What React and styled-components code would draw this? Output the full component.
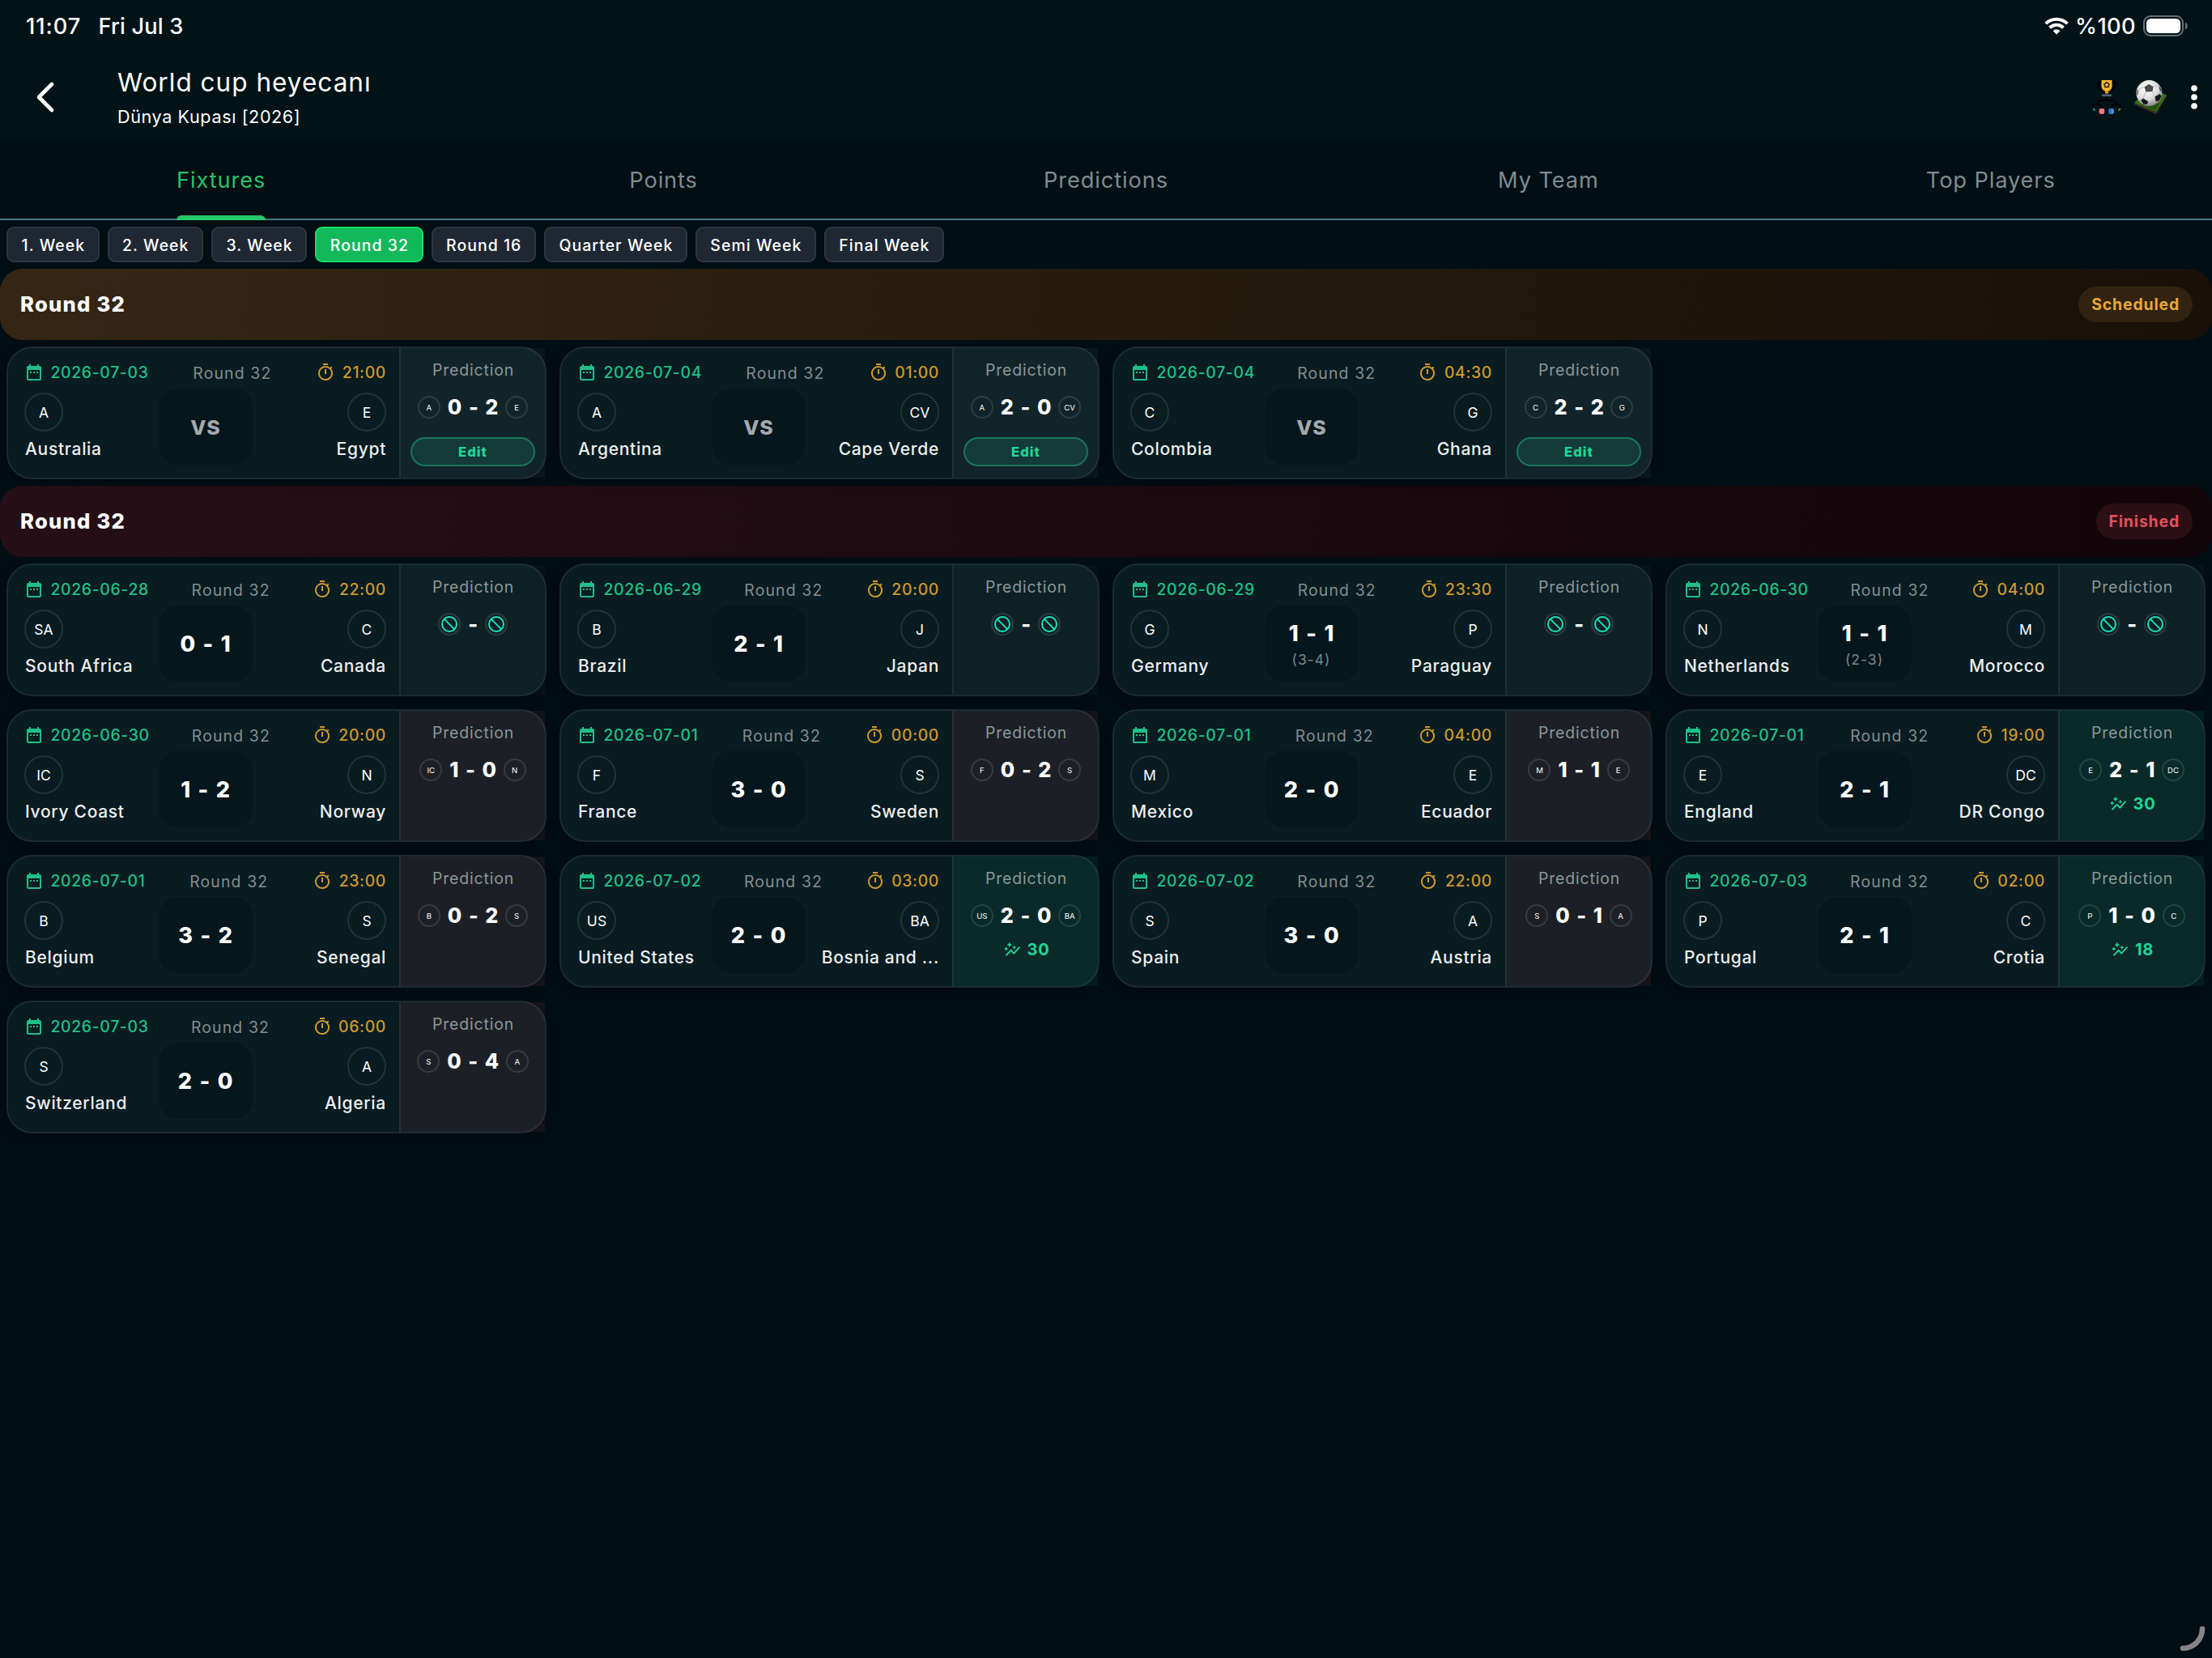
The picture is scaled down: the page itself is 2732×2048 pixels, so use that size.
import React from "react";
import styled, { createGlobalStyle } from "styled-components";
import { MdDateRange, MdOutlineTimer, MdAutoGraph } from "react-icons/md";

const tabs = ["Fixtures", "Points", "Predictions", "My Team", "Top Players"];
const weeks = [
  "1. Week",
  "2. Week",
  "3. Week",
  "Round 32",
  "Round 16",
  "Quarter Week",
  "Semi Week",
  "Final Week",
];

const scheduled = [
  { date: "2026-07-03", time: "21:00", home: ["A", "Australia"], away: ["E", "Egypt"], guess: "0 - 2" },
  { date: "2026-07-04", time: "01:00", home: ["A", "Argentina"], away: ["CV", "Cape Verde"], guess: "2 - 0" },
  { date: "2026-07-04", time: "04:30", home: ["C", "Colombia"], away: ["G", "Ghana"], guess: "2 - 2" },
];

const finished = [
  { date: "2026-06-28", time: "22:00", home: ["SA", "South Africa"], away: ["C", "Canada"], score: "0 - 1" },
  { date: "2026-06-29", time: "20:00", home: ["B", "Brazil"], away: ["J", "Japan"], score: "2 - 1" },
  { date: "2026-06-29", time: "23:30", home: ["G", "Germany"], away: ["P", "Paraguay"], score: "1 - 1", pens: "(3-4)" },
  { date: "2026-06-30", time: "04:00", home: ["N", "Netherlands"], away: ["M", "Morocco"], score: "1 - 1", pens: "(2-3)" },
  { date: "2026-06-30", time: "20:00", home: ["IC", "Ivory Coast"], away: ["N", "Norway"], score: "1 - 2", guess: "1 - 0" },
  { date: "2026-07-01", time: "00:00", home: ["F", "France"], away: ["S", "Sweden"], score: "3 - 0", guess: "0 - 2" },
  { date: "2026-07-01", time: "04:00", home: ["M", "Mexico"], away: ["E", "Ecuador"], score: "2 - 0", guess: "1 - 1" },
  { date: "2026-07-01", time: "19:00", home: ["E", "England"], away: ["DC", "DR Congo"], score: "2 - 1", guess: "2 - 1", points: 30 },
  { date: "2026-07-01", time: "23:00", home: ["B", "Belgium"], away: ["S", "Senegal"], score: "3 - 2", guess: "0 - 2" },
  { date: "2026-07-02", time: "03:00", home: ["US", "United States"], away: ["BA", "Bosnia and ..."], score: "2 - 0", guess: "2 - 0", points: 30 },
  { date: "2026-07-02", time: "22:00", home: ["S", "Spain"], away: ["A", "Austria"], score: "3 - 0", guess: "0 - 1" },
  { date: "2026-07-03", time: "02:00", home: ["P", "Portugal"], away: ["C", "Crotia"], score: "2 - 1", guess: "1 - 0", points: 18 },
  { date: "2026-07-03", time: "06:00", home: ["S", "Switzerland"], away: ["A", "Algeria"], score: "2 - 0", guess: "0 - 4" },
];

const WifiIcon = () => (
  <svg width="30" height="22" viewBox="0 0 30 22" fill="none" stroke="#fff" strokeWidth="4">
    <path d="M1.6 8.2 A19 19 0 0 1 28.4 8.2" />
    <path d="M6.6 13.2 A12 12 0 0 1 23.4 13.2" />
    <path d="M10.6 17.2 A6.2 6.2 0 0 1 19.4 17.2 L15 21.5 Z" fill="#fff" stroke="none" />
  </svg>
);

const BatteryIcon = () => (
  <svg width="56" height="26" viewBox="0 0 56 26" fill="none">
    <rect x="1" y="1" width="48" height="24" rx="8" stroke="#667175" strokeWidth="2" />
    <rect x="4" y="4" width="42" height="18" rx="5.5" fill="#fff" />
    <path d="M52 8.5 C55.6 10 55.6 16 52 17.5 Z" fill="#667175" />
  </svg>
);

const BackIcon = () => (
  <svg width="24" height="40" viewBox="0 0 24 40" fill="none">
    <path d="M20 4 L4 20 L20 36" stroke="#fff" strokeWidth="4.6" strokeLinecap="round" strokeLinejoin="round" />
  </svg>
);

const TrophyIcon = () => (
  <svg width="36" height="44" viewBox="0 0 36 44" fill="none">
    <path d="M12 3 H8 C6 8 9 13 13 14 M25 3 H28 C30 8 27 13 23 14" stroke="#000" strokeWidth="2.4" />
    <path d="M11.5 1 H24.5 V8 C24.5 12 21.5 15 18 15 S11.5 12 11.5 8 Z" fill="#ffb52e" />
    <path d="M18 3.8 L21 6 L19.9 9.6 H16.1 L15 6 Z" stroke="#1c1608" strokeWidth="1.5" />
    <rect x="16" y="15" width="4" height="3.5" fill="#f59a12" />
    <rect x="11.6" y="18" width="12.8" height="3.4" rx="1.2" fill="#50677f" stroke="#000" strokeWidth="0.8" />
    <path
      d="M18 22 V26 M7 31 V29 C7 27 8 26 10 26 H26 C28 26 29 27 29 29 V31 M1 37 V34 C1 32 2 31 4 31 H9 C11 31 12 32 12 34 V36 M24 36 V34 C24 32 25 31 27 31 H32 C34 31 35 32 35 34 V37"
      stroke="#000"
      strokeWidth="1.7"
    />
    <rect x="8.6" y="36" width="6.6" height="7" rx="2.4" fill="#fb7480" />
    <rect x="20.4" y="36" width="6.6" height="7" rx="2.4" fill="#4a90e2" />
    <path d="M20.4 38.5 C20.4 37 21 36 22.5 36 H23.5 V43 H22.5 C21 43 20.4 42 20.4 40.7 Z" fill="#2470c4" />
    <path d="M1 36 L3.6 38.6" stroke="#3f98a8" strokeWidth="1.6" />
    <path d="M35 36 L32.4 38.6" stroke="#7aa23c" strokeWidth="1.6" />
  </svg>
);

const BallIcon = () => (
  <svg width="42" height="42" viewBox="0 0 42 42">
    <defs>
      <radialGradient id="ball" cx="0.4" cy="0.3" r="0.75">
        <stop offset="0" stopColor="#fff" />
        <stop offset="0.6" stopColor="#dcdcdc" />
        <stop offset="1" stopColor="#77777a" />
      </radialGradient>
    </defs>
    <path d="M1 28 L8 21 L35 16 L41 18.5 L28 41 Z" fill="#35701a" />
    <path d="M1 28 L28 39 L41 18.5 V20.5 L28 42 L1 30 Z" fill="#3b2d18" />
    <path d="M8 30 L27 37.4 L33 28 Z" fill="#23500f" />
    <circle cx="19.4" cy="16" r="16" fill="url(#ball)" />
    <path d="M13.5 8.3 L19 5 L24.6 8 L23.4 14 L15.4 14.4 Z" fill="#4c4c4f" />
    <path d="M3.8 13 L6.4 11 L6 17.5 L4 19 Z" fill="#7c7c7e" />
    <path d="M9 25 L12 22.6 L18.4 26.4 L16.6 30 L12.6 29.8 Z" fill="#17171a" />
    <path d="M26.4 20.4 L32.4 17 L34.6 19.8 L32 25 L27.8 26.6 Z" fill="#17171a" />
    <path d="M31 7 L34 11 L35 15 L32.6 12.4 Z" fill="#3a3a3d" />
    <path
      d="M15.4 14.4 L12 22.6 M23.4 14 L26.4 20.4 M13.5 8.3 L6.4 11 M24.6 8 L31 7 M18.4 26.4 L27.8 26.6"
      stroke="#b4b4b6"
      strokeWidth="0.8"
    />
  </svg>
);

const MoreIcon = () => (
  <svg width="8" height="30" viewBox="0 0 8 30" fill="#fff">
    <circle cx="4" cy="4" r="3.8" />
    <circle cx="4" cy="15" r="3.8" />
    <circle cx="4" cy="26" r="3.8" />
  </svg>
);

const NoneIcon = () => (
  <svg width="20" height="20" viewBox="0 0 20 20" fill="none" stroke="#10e8be" strokeWidth="1.9">
    <circle cx="10" cy="10" r="9" />
    <path d="M3.7 3.7 L16.3 16.3" />
  </svg>
);

const Prediction = ({ match, editable }) => {
  const [home, away] = [match.home[0], match.away[0]];
  let tone = "none";
  if (editable) tone = "open";
  else if (match.points) tone = "won";
  else if (match.guess) tone = "lost";
  return (
    <PredictionPane $tone={tone}>
      <PredictionLabel>Prediction</PredictionLabel>
      <Guess>
        <Badge $small>{match.guess ? home : <NoneIcon />}</Badge>
        <GuessScore>{match.guess || "-"}</GuessScore>
        <Badge $small>{match.guess ? away : <NoneIcon />}</Badge>
      </Guess>
      {editable && <EditButton>Edit</EditButton>}
      {match.points && (
        <Points>
          <MdAutoGraph size={22} />
          {match.points}
        </Points>
      )}
    </PredictionPane>
  );
};

const MatchCard = ({ match, editable }) => (
  <Card>
    <Match>
      <MatchInfo>
        <Meta $color="#1fc088">
          <MdDateRange size={24} />
          {match.date}
        </Meta>
        <Stage>Round 32</Stage>
        <Meta $color="#cf982f">
          <MdOutlineTimer size={24} />
          {match.time}
        </Meta>
      </MatchInfo>
      <Teams>
        <Team>
          <Badge>{match.home[0]}</Badge>
          <TeamName>{match.home[1]}</TeamName>
        </Team>
        <ScoreBox>
          {match.score ? <Score>{match.score}</Score> : <Versus>VS</Versus>}
          {match.pens && <Penalties>{match.pens}</Penalties>}
        </ScoreBox>
        <Team $end>
          <Badge>{match.away[0]}</Badge>
          <TeamName>{match.away[1]}</TeamName>
        </Team>
      </Teams>
    </Match>
    <Prediction match={match} editable={editable} />
  </Card>
);

const App = () => {
  return (
    <Page>
      <GlobalStyle />
      <Header>
        <StatusBar>
          <Clock>11:07</Clock>
          <Today>Fri Jul 3</Today>
          <Device>
            <WifiIcon />
            <Charge>%100</Charge>
            <BatteryIcon />
          </Device>
        </StatusBar>
        <Toolbar>
          <BackIcon />
          <div className="titles">
            <h1>World cup heyecanı</h1>
            <p>Dünya Kupası [2026]</p>
          </div>
          <div className="actions">
            <TrophyIcon />
            <BallIcon />
            <MoreIcon />
          </div>
        </Toolbar>
      </Header>
      <Tabs>
        {tabs.map((tab, i) => (
          <Tab key={tab} $active={i === 0}>
            <span>{tab}</span>
          </Tab>
        ))}
      </Tabs>
      <Weeks>
        {weeks.map((week) => (
          <Week key={week} $active={week === "Round 32"}>
            {week}
          </Week>
        ))}
      </Weeks>
      <Banner $from="#352614" $to="#181009">
        <h2>Round 32</h2>
        <Status $color="#e6a838" $background="#312310">
          Scheduled
        </Status>
      </Banner>
      <Grid>
        {scheduled.map((match) => (
          <MatchCard key={match.home[1]} match={match} editable />
        ))}
      </Grid>
      <Banner $from="#260f16" $to="#120509">
        <h2>Round 32</h2>
        <Status $color="#e4505f" $background="#2c0f15">
          Finished
        </Status>
      </Banner>
      <Grid>
        {finished.map((match) => (
          <MatchCard key={match.home[1]} match={match} />
        ))}
      </Grid>
      <Corner viewBox="0 0 40 40">
        <path d="M32 8 A24 24 0 0 1 8 32" />
      </Corner>
    </Page>
  );
};
export default App;

const GlobalStyle = createGlobalStyle`
  * {
    box-sizing: border-box;
  }
  body {
    margin: 0;
    background: #010e14;
    color: #fff;
    font-family: Inter, "Noto Sans", sans-serif;
  }
  h1, h2, p {
    margin: 0;
  }
  svg {
    display: block;
    flex: none;
  }
`;
const Page = styled.div`
  position: relative;
  height: 2048px;
  overflow: hidden;
  white-space: nowrap;
`;
const Header = styled.header`
  height: 176px;
  background: #021318;
`;
const StatusBar = styled.div`
  display: flex;
  align-items: center;
  height: 64px;
  padding: 0 29px 0 32px;
  font-size: 27.2px;
  font-weight: 500;
`;
const Clock = styled.span`
  letter-spacing: 1px;
`;
const Today = styled.span`
  margin-left: 21px;
  letter-spacing: 0.2px;
`;
const Device = styled.div`
  display: flex;
  align-items: center;
  margin-left: auto;
`;
const Charge = styled.span`
  margin: 0 9px 0 8px;
  letter-spacing: 0.4px;
`;
const Toolbar = styled.div`
  display: flex;
  align-items: center;
  height: 112px;
  padding: 0 18px 0 44px;
  .titles {
    margin-left: 77px;
    h1 {
      font-size: 31.5px;
      line-height: 42px;
      font-weight: 400;
      letter-spacing: 1.02px;
      margin-bottom: 5px;
    }
    p {
      font-size: 21.6px;
      line-height: 32px;
      letter-spacing: 0.6px;
    }
  }
  .actions {
    display: flex;
    align-items: center;
    margin-left: auto;
    svg:nth-child(2) {
      margin: 0 29px 0 15px;
    }
  }
`;
const Tabs = styled.nav`
  display: grid;
  grid-template-columns: repeat(5, 1fr);
  height: 96px;
  border-bottom: 2px solid #4b7a84;
`;
const Tab = styled.div`
  display: flex;
  justify-content: center;
  font-size: 27.2px;
  letter-spacing: 0.9px;
  color: ${({ $active }) => ($active ? "#27c268" : "#7d8c90")};
  span {
    position: relative;
    line-height: 94px;
  }
  span::after {
    content: "";
    display: ${({ $active }) => ($active ? "block" : "none")};
    position: absolute;
    left: 0;
    right: 0;
    top: 90px;
    height: 6px;
    border-radius: 6px 6px 0 0;
    background: #27c76a;
  }
`;
const Weeks = styled.div`
  display: flex;
  gap: 10px;
  padding: 8px;
`;
const Week = styled.button`
  height: 44px;
  padding: 2px 15.5px 0 16.5px;
  border: 2px solid ${({ $active }) => ($active ? "#17dc67" : "#2c3641")};
  border-radius: 9px;
  background: ${({ $active }) => ($active ? "#12b95b" : "#1f2832")};
  color: #fff;
  font-family: inherit;
  font-size: 19.4px;
  font-weight: 500;
  letter-spacing: 1.08px;
`;
const Banner = styled.div`
  display: flex;
  align-items: center;
  justify-content: space-between;
  height: 88px;
  padding: 0 24px;
  border-radius: 28px;
  background: linear-gradient(95deg, ${({ $from }) => $from}, ${({ $to }) => $to});
  h2 {
    padding: 0 0 2px 1px;
    font-size: 25.6px;
    font-weight: 800;
    letter-spacing: 1.25px;
  }
`;
const Status = styled.span`
  padding: 0 16px;
  border-radius: 22px;
  background: ${({ $background }) => $background};
  color: ${({ $color }) => $color};
  font-size: 19.4px;
  font-weight: 700;
  line-height: 44px;
  height: 44px;
  letter-spacing: 0.85px;
`;
const Grid = styled.div`
  display: grid;
  grid-template-columns: repeat(4, 1fr);
  gap: 16px;
  padding: 8px;
`;
const Card = styled.div`
  display: grid;
  grid-template-columns: 1fr 180px;
  height: 164px;
  border: 2px solid #1b2c31;
  border-radius: 32px;
  background: #081c21;
  box-shadow: 0 4px 14px rgba(0, 4, 12, 0.35);
`;
const Match = styled.div`
  padding: 18px 16px 0 20px;
`;
const MatchInfo = styled.div`
  display: flex;
  align-items: center;
  justify-content: space-between;
  height: 24px;
`;
const Meta = styled.div`
  display: flex;
  align-items: center;
  gap: 8.5px;
  line-height: 22px;
  color: ${({ $color }) => $color};
  font-size: 19.4px;
  font-weight: 500;
  letter-spacing: 0.65px;
`;
const Stage = styled.span`
  padding-top: 2px;
  color: #838d90;
  font-size: 19.4px;
  letter-spacing: 1.15px;
`;
const Teams = styled.div`
  display: grid;
  grid-template-columns: 1fr 116px 1fr;
  margin-top: 8px;
`;
const Team = styled.div`
  display: flex;
  flex-direction: column;
  align-items: ${({ $end }) => ($end ? "flex-end" : "flex-start")};
  padding-top: 5px;
`;
const TeamName = styled.span`
  margin-top: 7px;
  padding-left: 1px;
  color: #eceeef;
  font-size: 21px;
  font-weight: 500;
  line-height: 29px;
  letter-spacing: 0.7px;
`;
const Badge = styled.div`
  display: flex;
  align-items: center;
  justify-content: center;
  flex: none;
  width: ${({ $small }) => ($small ? 28 : 48)}px;
  height: ${({ $small }) => ($small ? 28 : 48)}px;
  border: 2px solid ${({ $small }) => ($small ? "rgba(255, 255, 255, 0.12)" : "#22353a")};
  border-radius: 50%;
  font-size: ${({ $small }) => ($small ? 9.6 : 17.5)}px;
`;
const ScoreBox = styled.div`
  display: flex;
  flex-direction: column;
  align-items: center;
  justify-content: center;
  gap: 5px;
  height: 94px;
  padding-top: 2px;
  border-radius: 24px;
  background: #05161c;
`;
const Score = styled.span`
  padding-left: 1px;
  font-size: 27px;
  font-weight: 800;
  line-height: 32px;
  letter-spacing: 0.8px;
  word-spacing: 2px;
`;
const Versus = styled(Score)`
  color: #a3a9ac;
  font-size: 25px;
  letter-spacing: 0.8px;
`;
const Penalties = styled.span`
  color: #7b8689;
  font-size: 17.5px;
  line-height: 22px;
  letter-spacing: 1px;
`;
const paneColors = {
  open: "rgba(255, 255, 255, 0.04)",
  none: "rgba(255, 255, 255, 0.025)",
  lost: "rgba(255, 84, 96, 0.083)",
  won: "rgba(16, 185, 129, 0.095)",
};
const PredictionPane = styled.div`
  display: flex;
  flex-direction: column;
  align-items: center;
  padding: 15px 12px 0;
  border-left: 2px solid rgba(255, 255, 255, 0.07);
  background: ${({ $tone }) => paneColors[$tone]};
`;
const PredictionLabel = styled.span`
  padding-left: 1px;
  color: #8c9799;
  font-size: 19.4px;
  line-height: 25px;
  letter-spacing: 0.87px;
`;
const Guess = styled.div`
  display: flex;
  align-items: center;
  gap: 8px;
  height: 28px;
  margin-top: 19px;
`;
const GuessScore = styled.span`
  padding-left: 1px;
  font-size: 25.2px;
  font-weight: 800;
  letter-spacing: 0.7px;
  word-spacing: 1.7px;
`;
const EditButton = styled.button`
  align-self: stretch;
  height: 36px;
  margin-top: 23px;
  padding: 0;
  border: 2px solid #19775b;
  border-radius: 18px;
  background: #143a39;
  color: #20d797;
  font-family: inherit;
  font-size: 16.5px;
  font-weight: 800;
  letter-spacing: 1.1px;
`;
const Points = styled.div`
  display: flex;
  align-items: center;
  gap: 8px;
  height: 24px;
  margin-top: 16px;
  padding-left: 1px;
  color: #20d797;
  font-size: 20px;
  font-weight: 700;
  letter-spacing: 0.8px;
`;
const Corner = styled.svg`
  position: absolute;
  right: 4px;
  bottom: 4px;
  width: 40px;
  height: 40px;
  fill: none;
  stroke: #858585;
  stroke-width: 6.6;
  stroke-linecap: round;
`;
